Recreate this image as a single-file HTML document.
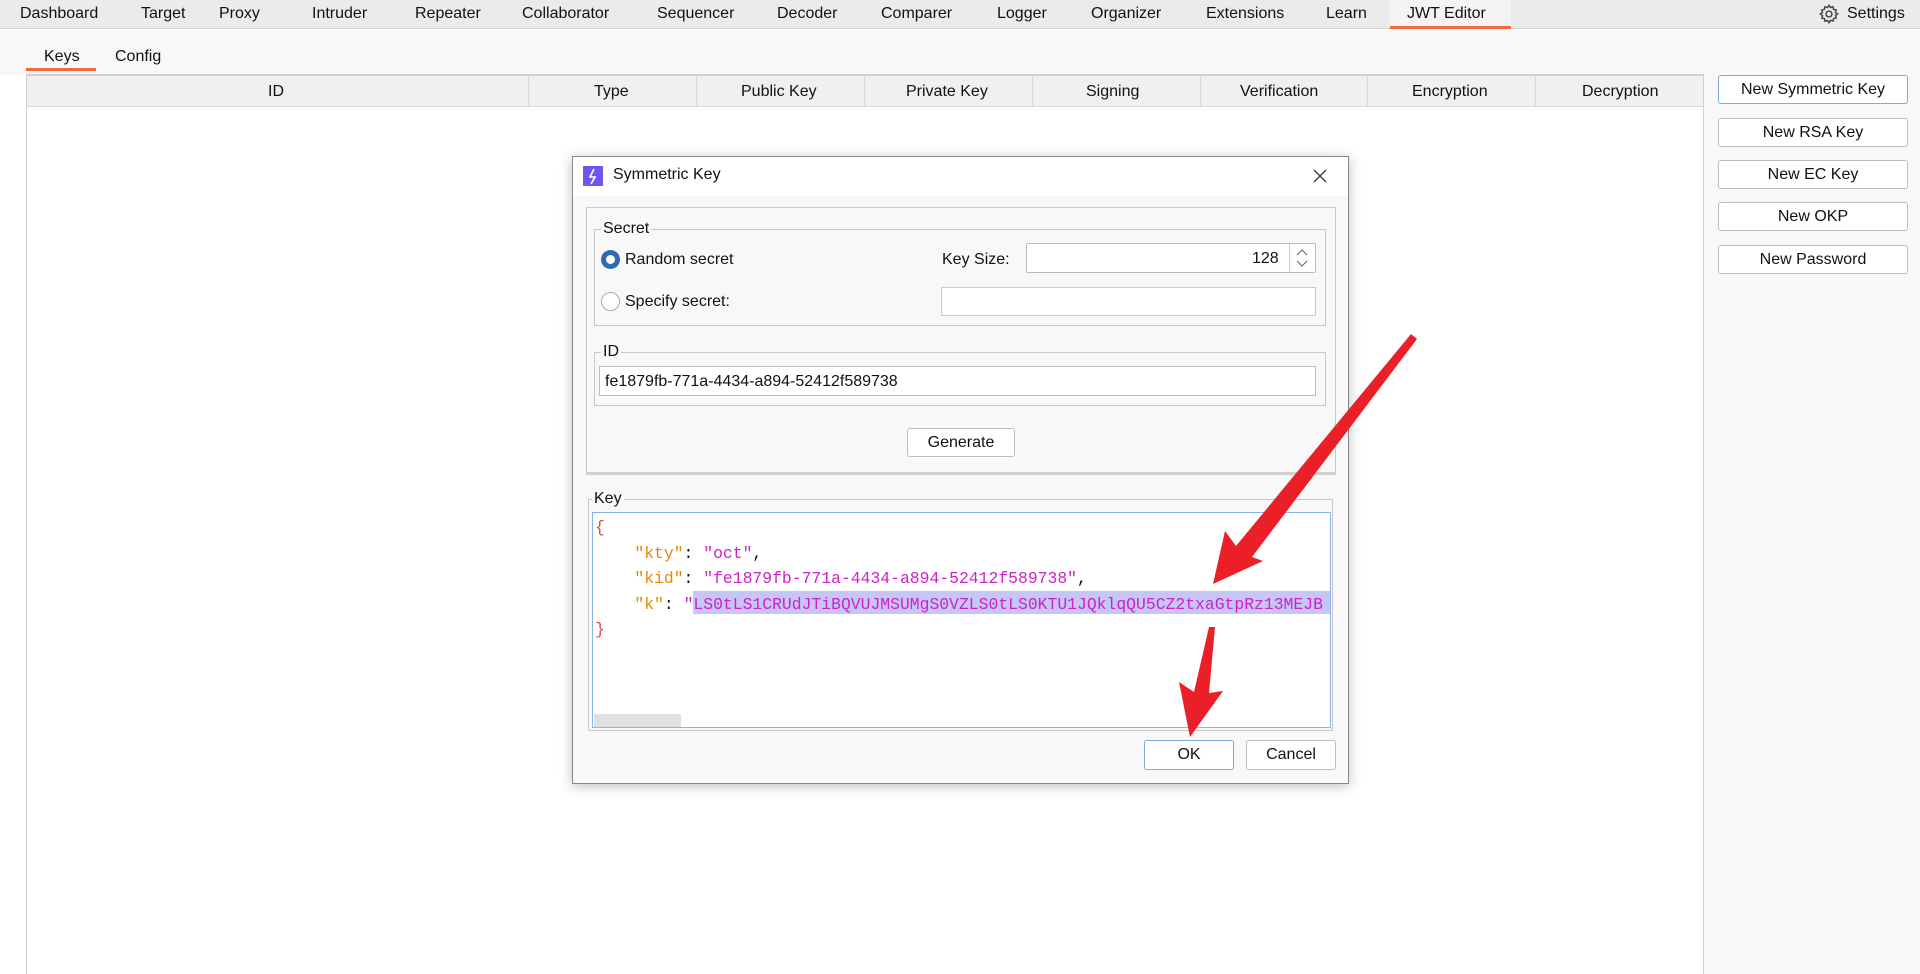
<!DOCTYPE html>
<html><head><meta charset="utf-8"><style>
*{margin:0;padding:0;box-sizing:border-box}
body{width:1920px;height:857px;overflow:hidden;background:#fff;font-family:"Liberation Sans",sans-serif;font-size:16px;color:#111;position:relative}
.a{position:absolute;white-space:nowrap}
.btn{position:absolute;background:#fff;border:1px solid #bdbdbd;border-radius:3px;text-align:center;font-size:16px}
.fs{position:absolute;border:1px solid #c8c8c8}
.lg{position:absolute;background:#f8f8f8;padding:0 2px;font-size:16px;line-height:18px}
.code{font-family:"Liberation Mono",monospace;font-size:16.4px}
</style></head><body>
<div class="a" style="left:0;top:0;width:1920px;height:29px;background:#ebebeb;border-bottom:1px solid #d4d4d4"></div>
<div class="a" style="left:1390px;top:0;width:121px;height:29px;background:#f4f4f4;border-bottom:3px solid #f06a3a"></div>
<div class="a" style="top:5px;left:20px">Dashboard</div>
<div class="a" style="top:5px;left:141px">Target</div>
<div class="a" style="top:5px;left:219px">Proxy</div>
<div class="a" style="top:5px;left:312px">Intruder</div>
<div class="a" style="top:5px;left:415px">Repeater</div>
<div class="a" style="top:5px;left:522px">Collaborator</div>
<div class="a" style="top:5px;left:657px">Sequencer</div>
<div class="a" style="top:5px;left:777px">Decoder</div>
<div class="a" style="top:5px;left:881px">Comparer</div>
<div class="a" style="top:5px;left:997px">Logger</div>
<div class="a" style="top:5px;left:1091px">Organizer</div>
<div class="a" style="top:5px;left:1206px">Extensions</div>
<div class="a" style="top:5px;left:1326px">Learn</div>
<div class="a" style="top:5px;left:1407px">JWT Editor</div>
<svg class="a" style="left:1818px;top:3px" width="22" height="22" viewBox="0 0 24 24" fill="none" stroke="#444" stroke-width="1.6"><circle cx="12" cy="12" r="3.2"/><path d="M12 2.5l1.6 2.4 2.8-.8.6 2.8 2.8.6-.8 2.8 2.4 1.6-2.4 1.6.8 2.8-2.8.6-.6 2.8-2.8-.8L12 21.5l-1.6-2.4-2.8.8-.6-2.8-2.8-.6.8-2.8L2.5 12l2.4-1.6-.8-2.8 2.8-.6.6-2.8 2.8.8z"/></svg>
<div class="a" style="top:5px;left:1847px">Settings</div>
<div class="a" style="left:0;top:30px;width:1920px;height:45px;background:#f8f8f8"></div>
<div class="a" style="top:48px;left:44px">Keys</div>
<div class="a" style="top:48px;left:115px">Config</div>
<div class="a" style="left:26px;top:68px;width:70px;height:3px;background:#f06a3a"></div>
<div class="a" style="left:26px;top:74px;width:1678px;height:900px;border:1px solid #cfcfcf;border-top:2px solid #cfcfcf;border-bottom:none;background:#fff"></div>
<div class="a" style="left:27px;top:76px;width:1676px;height:31px;background:#f0f0f0;border-bottom:1px solid #d8d8d8"></div>
<div class="a" style="left:528px;top:76px;width:1px;height:31px;background:#d8d8d8"></div>
<div class="a" style="left:696px;top:76px;width:1px;height:31px;background:#d8d8d8"></div>
<div class="a" style="left:864px;top:76px;width:1px;height:31px;background:#d8d8d8"></div>
<div class="a" style="left:1032px;top:76px;width:1px;height:31px;background:#d8d8d8"></div>
<div class="a" style="left:1200px;top:76px;width:1px;height:31px;background:#d8d8d8"></div>
<div class="a" style="left:1367px;top:76px;width:1px;height:31px;background:#d8d8d8"></div>
<div class="a" style="left:1535px;top:76px;width:1px;height:31px;background:#d8d8d8"></div>
<div class="a" style="top:83px;left:268px">ID</div>
<div class="a" style="top:83px;left:594px">Type</div>
<div class="a" style="top:83px;left:741px">Public Key</div>
<div class="a" style="top:83px;left:906px">Private Key</div>
<div class="a" style="top:83px;left:1086px">Signing</div>
<div class="a" style="top:83px;left:1240px">Verification</div>
<div class="a" style="top:83px;left:1412px">Encryption</div>
<div class="a" style="top:83px;left:1582px">Decryption</div>
<div class="a" style="left:1704px;top:74px;width:216px;height:900px;background:#f8f8f8"></div>
<div class="btn" style="left:1718px;top:75px;width:190px;height:29px;line-height:27px;border-color:#7fa8dc">New Symmetric Key</div>
<div class="btn" style="left:1718px;top:118px;width:190px;height:29px;line-height:27px">New RSA Key</div>
<div class="btn" style="left:1718px;top:160px;width:190px;height:29px;line-height:27px">New EC Key</div>
<div class="btn" style="left:1718px;top:202px;width:190px;height:29px;line-height:27px">New OKP</div>
<div class="btn" style="left:1718px;top:245px;width:190px;height:29px;line-height:27px">New Password</div>
<div class="a" style="left:572px;top:156px;width:777px;height:628px;background:#f8f8f8;border:1px solid #888;box-shadow:0 2px 12px rgba(0,0,0,.25)"></div>
<div class="a" style="left:573px;top:157px;width:775px;height:39px;background:#fff"></div>
<div class="a" style="left:583px;top:166px;width:20px;height:20px;background:#6a58f0"></div>
<svg class="a" style="left:583px;top:166px" width="20" height="20"><path d="M11 3L7 11h5l-4 7" stroke="#fff" stroke-width="1.6" fill="none"/></svg>
<div class="a" style="top:166px;left:613px">Symmetric Key</div>
<svg class="a" style="left:1312px;top:168px" width="16" height="16"><path d="M2 2L14 14M14 2L2 14" stroke="#333" stroke-width="1.3"/></svg>
<div class="fs" style="left:586px;top:207px;width:750px;height:267px"></div>
<div class="fs" style="left:594px;top:229px;width:732px;height:97px"></div>
<div class="lg" style="left:601px;top:220px">Secret</div>
<div class="a" style="left:601px;top:250px;width:19px;height:19px;border-radius:50%;background:#2d6bb5"></div>
<div class="a" style="left:606px;top:255px;width:9px;height:9px;border-radius:50%;background:#fff"></div>
<div class="a" style="top:251px;left:625px">Random secret</div>
<div class="a" style="top:251px;left:942px">Key Size:</div>
<div class="a" style="left:1026px;top:243px;width:290px;height:30px;background:#fff;border:1px solid #bbb;border-radius:2px"></div>
<div class="a" style="left:1289px;top:244px;width:1px;height:28px;background:#ccc"></div>
<div class="a" style="top:250px;left:1252px">128</div>
<svg class="a" style="left:1295px;top:248px" width="14" height="20"><path d="M2 7L7 2L12 7M2 13L7 18L12 13" stroke="#666" fill="none"/></svg>
<div class="a" style="left:601px;top:292px;width:19px;height:19px;border-radius:50%;border:1px solid #aaa;background:#fff"></div>
<div class="a" style="top:293px;left:625px">Specify secret:</div>
<div class="a" style="left:941px;top:287px;width:375px;height:29px;background:#fff;border:1px solid #ccc"></div>
<div class="fs" style="left:594px;top:352px;width:732px;height:54px"></div>
<div class="lg" style="left:601px;top:343px">ID</div>
<div class="a" style="left:599px;top:366px;width:717px;height:30px;background:#fff;border:1px solid #bbb"></div>
<div class="a" style="top:373px;left:605px">fe1879fb-771a-4434-a894-52412f589738</div>
<div class="btn" style="left:907px;top:428px;width:108px;height:29px;line-height:28px">Generate</div>
<div class="a" style="left:586px;top:472px;width:750px;height:3px;background:#d0d0d0"></div>
<div class="fs" style="left:588px;top:499px;width:745px;height:232px"></div>
<div class="lg" style="left:592px;top:490px">Key</div>
<div class="a" style="left:592px;top:512px;width:739px;height:216px;background:#fff;border:1px solid #8ab4e8;overflow:hidden"></div>
<div class="a" style="left:693px;top:591px;width:637px;height:23px;background:#c6c6f6"></div>
<div class="a code" style="left:595px;top:515px;line-height:25.5px;width:734px;overflow:hidden">
<div style="color:#e04848">{</div>
<div>&nbsp;&nbsp;&nbsp;&nbsp;<span style="color:#e88a00">"kty"</span>: <span style="color:#d020c8">"oct"</span>,</div>
<div>&nbsp;&nbsp;&nbsp;&nbsp;<span style="color:#e88a00">"kid"</span>: <span style="color:#d020c8">"fe1879fb-771a-4434-a894-52412f589738"</span>,</div>
<div>&nbsp;&nbsp;&nbsp;&nbsp;<span style="color:#e88a00">"k"</span>: <span style="color:#d020c8">"LS0tLS1CRUdJTiBQVUJMSUMgS0VZLS0tLS0KTU1JQklqQU5CZ2txaGtpRz13MEJB</span></div>
<div style="color:#e04848">}</div>
</div>
<div class="a" style="left:594px;top:714px;width:87px;height:13px;background:#e0e0e0"></div>
<div class="btn" style="left:1144px;top:740px;width:90px;height:30px;line-height:28px;border-color:#7fa8dc">OK</div>
<div class="btn" style="left:1246px;top:740px;width:90px;height:30px;line-height:28px">Cancel</div>
<svg class="a" style="left:0;top:0" width="1920" height="857">
<polygon fill="#ea1f28" points="1213,584 1225,531 1236,546 1411,334 1417,339 1252,557 1263,561"/>
<polygon fill="#ea1f28" points="1190,737 1179,682 1194,692 1209,627 1215,627 1209,693 1223,691"/>
</svg>
</body></html>
